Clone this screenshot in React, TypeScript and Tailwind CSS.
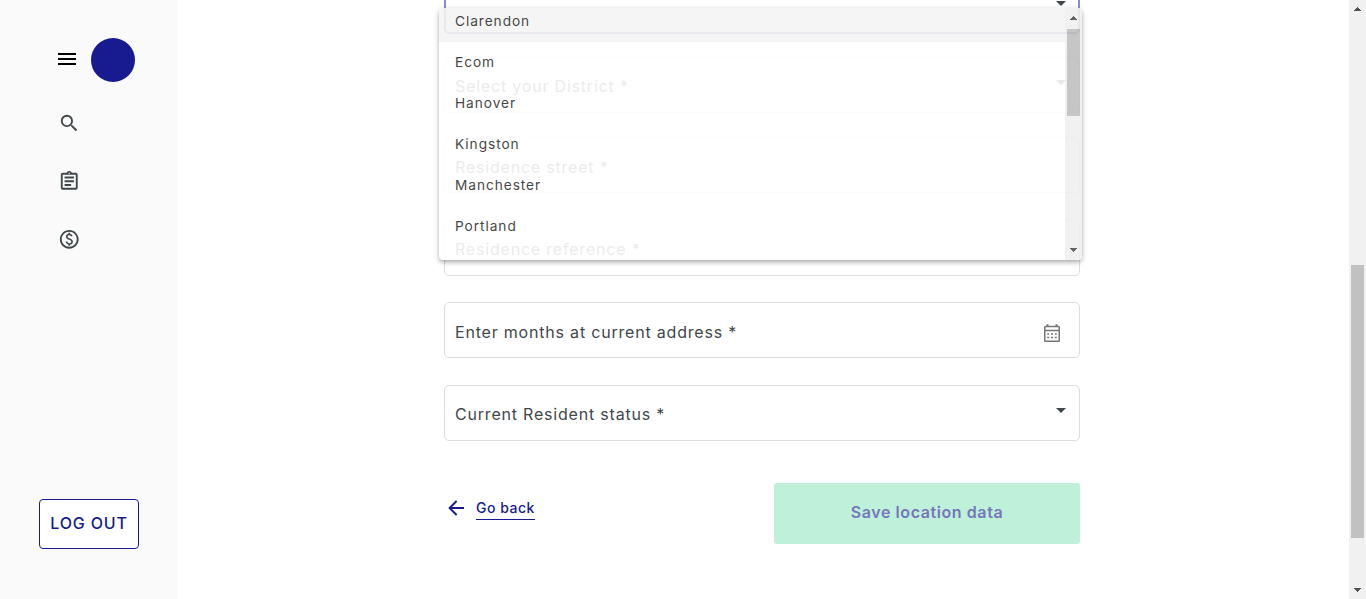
import React from "react";

const options = ["Clarendon", "Ecom", "Hanover", "Kingston", "Manchester", "Portland"];

function Caret() {
  return (
    <svg width="10" height="5" viewBox="0 0 10 5" className="mr-[13px] mb-[6px] shrink-0">
      <path d="M0 0h10L5 5z" fill="#3f474b" />
    </svg>
  );
}

function CalendarIcon() {
  return (
    <svg width="16" height="18" viewBox="0 0 16 18" className="mr-[19px] mt-[5px] shrink-0" fill="none" stroke="#757575">
      <rect x="0.75" y="2.5" width="14.5" height="14.7" rx="0.8" strokeWidth="1.5" />
      <path d="M1 6.5h14" strokeWidth="1.5" />
      <path d="M3.5 0.3v2.5M12.5 0.3v2.5" strokeWidth="2" />
      <path d="M3.2 10h9.6M3.2 13.5h9.6" strokeWidth="1.7" strokeDasharray="2 1.8" />
    </svg>
  );
}

function Field({
  label,
  icon,
  className = "",
  labelClass = "pt-[4px]",
}: {
  label?: string;
  icon?: React.ReactNode;
  className?: string;
  labelClass?: string;
}) {
  return (
    <div className={`flex h-14 w-full shrink-0 items-center justify-between rounded-[5px] border border-[#dcdddd] pl-[10px] ${className}`}>
      <span className={`text-[16px] leading-6 tracking-[0.8px] text-[#3f474b] ${labelClass}`}>{label}</span>
      {icon}
    </div>
  );
}

function ScrollArrow({ down = false }: { down?: boolean }) {
  return (
    <svg width="7" height="4" viewBox="0 0 7 4" shapeRendering="crispEdges">
      <path d={down ? "M0 0h7v1H0zM1 1h5v1H1zM2 2h3v1H2zM3 3h1v1H3z" : "M3 0h1v1H3zM2 1h3v1H2zM1 2h5v1H1zM0 3h7v1H0z"} fill="#505050" />
    </svg>
  );
}

function Sidebar() {
  return (
    <aside className="flex h-full w-[178px] shrink-0 flex-col bg-[#fafafa]">
      <div className="mt-[38px] ml-[55px] flex items-center gap-3">
        <svg width="24" height="24" viewBox="0 0 24 24" className="-mt-[3px]">
          <path d="M3 18h18v-2H3v2zm0-5h18v-2H3v2zm0-7v2h18V6H3z" />
        </svg>
        <div className="size-11 rounded-full bg-[#181b8f]" />
      </div>
      <nav className="mt-[30px] ml-[58px] flex flex-col gap-[35.5px] text-[#3f474b]">
        <svg width="22.5" height="22.5" viewBox="0 0 24 24" fill="currentColor">
          <path d="M15.5 14h-.79l-.28-.27A6.47 6.47 0 0 0 16 9.5 6.5 6.5 0 1 0 9.5 16c1.61 0 3.09-.59 4.23-1.57l.27.28v.79l5 4.99L20.49 19l-4.99-5zm-6 0C7.01 14 5 11.99 5 9.5S7.01 5 9.5 5 14 7.01 14 9.5 11.99 14 9.5 14z" />
        </svg>
        <svg width="22.5" height="22.5" viewBox="0 0 24 24" fill="currentColor">
          <path d="M7 15h7v2H7zm0-4h10v2H7zm0-4h10v2H7zm12-4h-4.18C14.4 1.84 13.3 1 12 1s-2.4.84-2.82 2H5a2 2 0 0 0-2 2v14a2 2 0 0 0 2 2h14a2 2 0 0 0 2-2V5a2 2 0 0 0-2-2zm-7-.25c.41 0 .75.34.75.75s-.34.75-.75.75-.75-.34-.75-.75.34-.75.75-.75zM19 19H5V5h14v14z" />
        </svg>
        <svg width="22.5" height="22.5" viewBox="0 0 24 24" fill="currentColor">
          <path d="M12 2C6.48 2 2 6.48 2 12s4.48 10 10 10 10-4.48 10-10S17.52 2 12 2zm0 18c-4.41 0-8-3.59-8-8s3.59-8 8-8 8 3.59 8 8-3.59 8-8 8zm.89-8.9c-1.78-.59-2.64-.96-2.64-1.9 0-1.02 1.11-1.39 1.81-1.39 1.31 0 1.79.99 1.9 1.34l1.58-.67c-.15-.44-.82-1.91-2.66-2.23V5h-1.75v1.26c-2.6.56-2.62 2.85-2.62 2.96 0 2.27 2.25 2.91 3.35 3.31 1.58.56 2.28 1.07 2.28 2.03 0 1.13-1.05 1.61-1.98 1.61-1.82 0-2.34-1.87-2.4-2.09l-1.66.67c.63 2.19 2.28 2.78 3.02 2.96V19h1.75v-1.24c.52-.09 3.02-.59 3.02-3.22.01-1.39-.6-2.61-3-3.44z" />
        </svg>
      </nav>
      <button className="mt-auto mb-[50px] ml-[39px] h-[50px] w-[100px] rounded-[4px] border border-[#181b8f] bg-white pb-[2px] text-[16px] font-medium tracking-[0.84px] whitespace-nowrap text-[#181b8f]">
        LOG OUT
      </button>
    </aside>
  );
}

function OptionPanel() {
  return (
    <div className="absolute top-[8px] left-[-5px] flex h-[252px] w-[643px] overflow-hidden rounded-[4px] bg-white opacity-[0.89] shadow-[0_2px_4px_-1px_rgba(0,0,0,0.25),0_3px_5px_rgba(0,0,0,0.14),0_1px_6px_rgba(0,0,0,0.1)]">
      <ul className="flex-1 overflow-hidden">
        {options.map((name, i) => (
          <li
            key={name}
            className={
              "flex items-center pl-4 text-[13.7px] tracking-[0.94px] text-[#303030] " +
              (i === 0 ? "h-[34px] bg-[#f4f4f4] pb-[8px]" : "h-[41px]")
            }
          >
            {name}
          </li>
        ))}
      </ul>
      <div className="flex w-[17px] flex-col items-center bg-[#f0f0f0] pt-[8px] pb-[8px]">
        <ScrollArrow />
        <div className="mt-[9px] h-[87px] w-[13px] bg-[#bfbfbf]" />
        <div className="mt-auto">
          <ScrollArrow down />
        </div>
      </div>
    </div>
  );
}

export default function App() {
  return (
    <div className="flex h-[599px] w-full overflow-hidden bg-white font-['Inter',sans-serif]">
      <Sidebar />
      <main className="flex h-full flex-1 justify-center overflow-hidden pr-[3px]">
        <div className="relative flex w-[636px] flex-col">
          <Field className="-mt-[22px] border-2! border-[#8c8dc7]! [&>svg]:mr-[12px]" icon={<Caret />} />
          <Field className="mt-[23px]" labelClass="pt-[2px]" label="Select your District *" icon={<Caret />} />
          <Field className="mt-[24px]" label="Residence street *" />
          <Field className="mt-[27px]" labelClass="pt-[2px]" label="Residence reference *" />
          <Field className="mt-[26px]" label="Enter months at current address *" icon={<CalendarIcon />} />
          <Field className="mt-[27px]" labelClass="pt-[2px]" label="Current Resident status *" icon={<Caret />} />
          <div className="mt-[42px] flex items-start justify-between">
            <a className="mt-[14px] ml-[4px] flex items-start gap-[11px] text-[#181b8f]">
              <svg width="17" height="16" viewBox="0 0 17 16" className="mt-[3px]" fill="none" stroke="currentColor" strokeWidth="1.9">
                <path d="M16 8H1.8M8.6 1L1.6 8l7 7" />
              </svg>
              <span className="border-b border-[#181b8f] text-[14px] leading-[22px] font-medium tracking-[0.52px]">Go back</span>
            </a>
            <button className="h-[61px] w-[306px] rounded-[3px] bg-[#bff0d9] pb-[3px] text-[16px] font-semibold tracking-[0.58px] text-[#7677ba]">
              Save location data
            </button>
          </div>
          <OptionPanel />
        </div>
      </main>
      <div className="flex h-full w-[17px] flex-col items-center bg-[#f1f1f1] py-[7px]">
        <ScrollArrow />
        <div className="mt-[254px] h-[273px] w-[13px] bg-[#c1c1c1]" />
        <div className="mt-auto">
          <ScrollArrow down />
        </div>
      </div>
    </div>
  );
}
